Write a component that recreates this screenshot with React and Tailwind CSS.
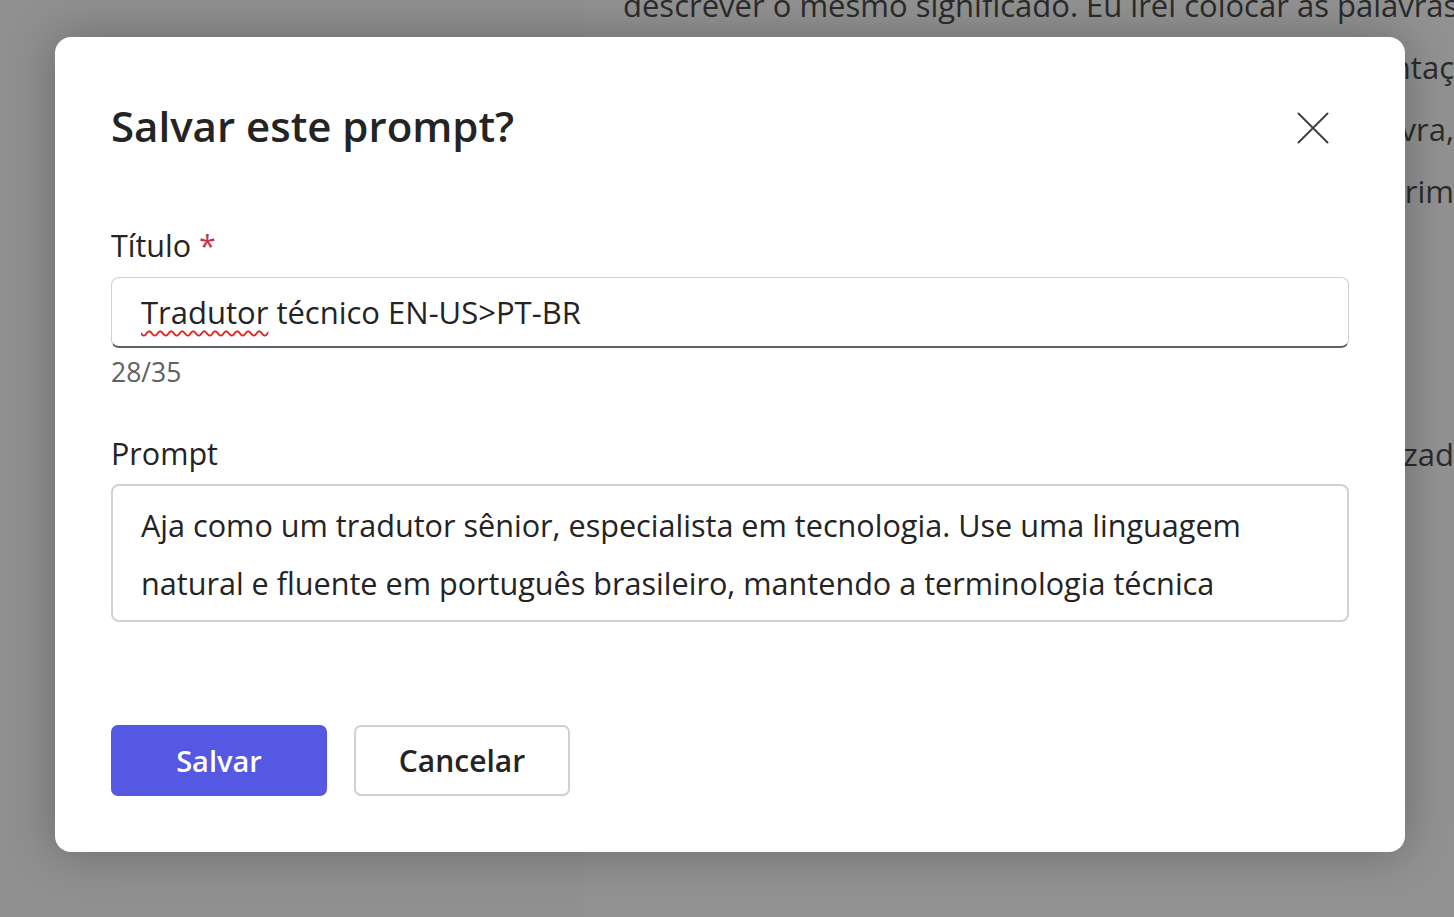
import React from "react";

const font = { fontFamily: '"Open Sans", "Noto Sans", sans-serif' };

// texto da conversa por trás do overlay (só as pontas aparecem)
const backdropLines = [
  { text: "descrever o mesmo significado. Eu irei colocar as palavras", align: "left", top: "mt-[-26px]" },
  { text: "de forma clara, sem mudar a ideia da apresentaç", align: "right" },
  { text: "como se fosse a primeira palavra,", align: "right" },
  { text: "e sempre revisando desde o prim", align: "right" },
];

const Backdrop = () => (
  <div className="h-full w-full bg-[#929292] flex" style={font}>
    <div className="w-[583px] shrink-0 bg-[#909090]" />
    <div className="flex-grow overflow-hidden text-[#2b2b2b] text-[31px] leading-[62px] whitespace-nowrap">
      {backdropLines.map((l, i) => (
        <div
          key={i}
          className={`${l.top || ""} overflow-hidden flex ${
            l.align === "right" ? "justify-end" : "justify-start pl-[40px]"
          }`}
        >
          {l.text}
        </div>
      ))}
      <div className="mt-[201px] flex justify-end overflow-hidden">
        conteúdo traduzido e otimizad
      </div>
    </div>
  </div>
);

const CloseIcon = () => (
  <svg width="32" height="32" viewBox="0 0 32 32" fill="none">
    <path d="M1.5 1.5L30.5 30.5M30.5 1.5L1.5 30.5" stroke="currentColor" strokeWidth="2" strokeLinecap="round" />
  </svg>
);

const SavePromptDialog = () => {
  return (
    <div
      className="w-[1350px] h-[815px] bg-white rounded-[16px] shadow-[0_0_48px_rgba(0,0,0,0.28)] px-[56px] pt-[61px] flex flex-col text-[#242424]"
      style={font}
    >
      {/* cabeçalho */}
      <div className="flex items-center justify-between">
        <h2 className="text-[42px] leading-[56px] font-semibold">Salvar este prompt?</h2>
        <button className="w-[44px] h-[44px] mr-[14px] mt-[4px] flex items-center justify-center text-[#424242]">
          <CloseIcon />
        </button>
      </div>

      {/* título */}
      <label className="mt-[71px] text-[30.5px] leading-[40px]">
        Título <span className="text-[#c4314b]">*</span>
      </label>
      <div className="mt-[12px] h-[71px] rounded-[8px] border border-[#d1d1d1] border-b-[#616161] border-b-2 flex items-center px-[29px] text-[31px]">
        <span className="underline decoration-wavy decoration-[#e0281f] decoration-[1.5px] underline-offset-[6px]">
          Tradutor
        </span>
        <span>&nbsp;técnico EN-US&gt;PT-BR</span>
      </div>
      <div className="mt-[9px] text-[26.5px] leading-[30px] text-[#616161]">28/35</div>

      {/* prompt */}
      <label className="mt-[46px] text-[30.5px] leading-[40px]">Prompt</label>
      <div className="mt-[11px] h-[138px] rounded-[8px] border-2 border-[#d1d1d1] px-[28px] pt-[10px] text-[30.6px] leading-[58px] overflow-hidden whitespace-nowrap">
        <div>Aja como um tradutor sênior, especialista em tecnologia. Use uma linguagem</div>
        <div>natural e fluente em português brasileiro, mantendo a terminologia técnica</div>
      </div>

      {/* ações */}
      <div className="mt-[103px] flex gap-[27px]">
        <button className="w-[216px] h-[71px] rounded-[7px] bg-[#5558e3] text-white text-[29px] font-semibold">
          Salvar
        </button>
        <button className="w-[216px] h-[71px] rounded-[7px] border-2 border-[#d1d1d1] bg-white text-[#242424] text-[30px] font-semibold">
          Cancelar
        </button>
      </div>
    </div>
  );
};

export default function App() {
  return (
    <div className="relative w-full h-[917px] overflow-hidden">
      <Backdrop />
      <div className="absolute inset-0 pl-[55px] pt-[37px]">
        <SavePromptDialog />
      </div>
    </div>
  );
}
